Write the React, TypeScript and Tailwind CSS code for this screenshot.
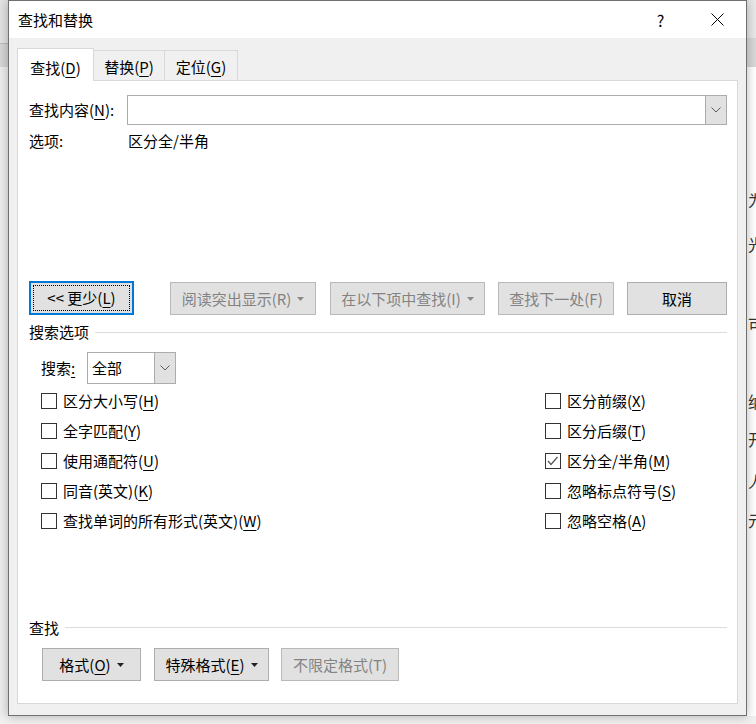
import React from "react";

const U = ({ c }: { c: string }) => (
  <span className="underline decoration-1 underline-offset-[3px]">{c}</span>
);

const Mn = ({ t, k }: { t: string; k: string }) => (
  <>
    {t}(<U c={k} />)
  </>
);

const Tri = ({ color }: { color: string }) => (
  <svg width="7" height="4" viewBox="0 0 7 4" className="ml-[6px]">
    <polygon points="0,0 7,0 3.5,4" fill={color} />
  </svg>
);

const Chev = () => (
  <svg width="10" height="6" viewBox="0 0 10 6">
    <polyline points="0.5,0.5 5,5 9.5,0.5" fill="none" stroke="#5a5a5a" strokeWidth="1" />
  </svg>
);

function Btn({
  w,
  children,
  disabled,
  arrow,
}: {
  w: string;
  children: React.ReactNode;
  disabled?: boolean;
  arrow?: boolean;
}) {
  return (
    <div
      className={`${w} h-[33px] flex items-center justify-center border bg-[#e1e1e1] ${
        disabled ? "border-[#b9b9b9] text-[#838383]" : "border-[#adadad] text-black"
      }`}
    >
      <span>{children}</span>
      {arrow && <Tri color={disabled ? "#8a8a8a" : "#222222"} />}
    </div>
  );
}

function Box({ checked }: { checked?: boolean }) {
  return (
    <span className="w-[16px] h-[16px] border border-[#333333] bg-white flex items-center justify-center shrink-0">
      {checked && (
        <svg width="14" height="14" viewBox="0 0 14 14">
          <polyline points="2,7 5,10.5 11.5,3" fill="none" stroke="#555555" strokeWidth="1.2" />
        </svg>
      )}
    </span>
  );
}

function Row({ children, checked }: { children: React.ReactNode; checked?: boolean }) {
  return (
    <div className="h-[30px] flex items-center gap-[6px]">
      <Box checked={checked} />
      <span>{children}</span>
    </div>
  );
}

export default function App() {
  return (
    <div className="w-[756px] h-[724px] overflow-hidden bg-[#f0f0f0] flex flex-col font-['Noto_Sans_CJK_SC',sans-serif] text-[15px] leading-[20px] text-black">
      <div className="flex h-[716px] shrink-0">
        {/* left background strip */}
        <div className="w-[8px] shrink-0 flex flex-col">
          <div className="h-[43px] bg-[#e3e3e3]" />
          <div className="h-[24px] bg-[#d6d6d6] border-t border-[#bcbcbc]" />
          <div className="flex-1 bg-[#eeeeee]" />
        </div>

        {/* dialog */}
        <div className="relative z-10 w-[739px] h-[716px] shrink-0 border border-[#707070] bg-[#f0f0f0] flex flex-col shadow-[0_0_10px_rgba(0,0,0,0.28)]">
          {/* title bar */}
          <div className="h-[37px] bg-white flex items-center pl-[9px] shrink-0">
            <span>查找和替换</span>
            <div className="ml-auto flex h-full">
              <div className="w-[57px] h-full flex items-center justify-center text-[16px]">?</div>
              <div className="w-[57px] h-full flex items-center justify-center">
                <svg width="13" height="13" viewBox="0 0 13 13">
                  <line x1="0.5" y1="0.5" x2="12.5" y2="12.5" stroke="#000" strokeWidth="1" />
                  <line x1="12.5" y1="0.5" x2="0.5" y2="12.5" stroke="#000" strokeWidth="1" />
                </svg>
              </div>
            </div>
          </div>

          {/* body */}
          <div className="flex-1 flex flex-col px-[8px] pt-[10px] pb-[11px]">
            {/* tabs */}
            <div className="h-[33px] flex items-end -mb-px relative z-10 shrink-0">
              <div className="w-[77px] h-[33px] bg-white border border-b-0 border-[#d9d9d9] flex items-center justify-center pt-[5px] relative z-10">
                <span>
                  <Mn t="查找" k="D" />
                </span>
              </div>
              <div className="w-[72px] h-[31px] -ml-px bg-[#f0f0f0] border border-[#d9d9d9] flex items-center justify-center pt-[3px]">
                <span>
                  <Mn t="替换" k="P" />
                </span>
              </div>
              <div className="w-[74px] h-[31px] -ml-px bg-[#f0f0f0] border border-[#d9d9d9] flex items-center justify-center pt-[3px]">
                <span>
                  <Mn t="定位" k="G" />
                </span>
              </div>
            </div>

            {/* panel */}
            <div className="flex-1 bg-white border border-[#d9d9d9] flex flex-col pl-[11px] pr-[10px]">
              {/* find what */}
              <div className="mt-[14px] h-[30px] flex items-center">
                <div className="w-[98px] shrink-0">
                  查找内容(<U c="N" />):
                </div>
                <div className="w-[600px] h-[30px] border border-[#acacac] flex">
                  <div className="flex-1 bg-white" />
                  <div className="w-[21px] bg-[#e1e1e1] border-l border-[#acacac] flex items-center justify-center">
                    <Chev />
                  </div>
                </div>
              </div>

              {/* options */}
              <div className="mt-[6px] h-[20px] flex">
                <div className="w-[99px] shrink-0">选项:</div>
                <div>区分全/半角</div>
              </div>

              {/* buttons */}
              <div className="mt-[130px] h-[34px] flex items-end">
                <div className="relative w-[105px] h-[34px] border-2 border-[#0078d7] bg-[#e1e1e1] flex items-center justify-center">
                  <div className="absolute inset-[2px] border border-dotted border-black" />
                  <span>
                    &lt;&lt; 更少(<U c="L" />)
                  </span>
                </div>
                <div className="ml-[36px]">
                  <Btn w="w-[146px]" disabled arrow>
                    阅读突出显示(R)
                  </Btn>
                </div>
                <div className="ml-[14px]">
                  <Btn w="w-[155px]" disabled arrow>
                    在以下项中查找(I)
                  </Btn>
                </div>
                <div className="ml-[13px]">
                  <Btn w="w-[116px]" disabled>
                    查找下一处(F)
                  </Btn>
                </div>
                <div className="ml-[13px]">
                  <Btn w="w-[100px]">取消</Btn>
                </div>
              </div>

              {/* search options header */}
              <div className="mt-[7px] h-[20px] flex items-center">
                <span>搜索选项</span>
                <div className="flex-1 h-px bg-[#dcdcdc] ml-[6px] mt-[1px]" />
              </div>

              {/* search select */}
              <div className="mt-[10px] h-[32px] flex items-center pl-[12px]">
                <div className="w-[46px] shrink-0">
                  搜索<U c=":" />
                </div>
                <div className="w-[89px] h-[32px] border border-[#acacac] flex bg-white">
                  <div className="flex-1 flex items-center pl-[4px]">全部</div>
                  <div className="w-[21px] bg-[#e1e1e1] border-l border-[#acacac] flex items-center justify-center">
                    <Chev />
                  </div>
                </div>
              </div>

              {/* checkboxes */}
              <div className="mt-[2px] flex">
                <div className="w-[516px] shrink-0 pl-[12px] flex flex-col">
                  <Row>
                    <Mn t="区分大小写" k="H" />
                  </Row>
                  <Row>
                    <Mn t="全字匹配" k="Y" />
                  </Row>
                  <Row>
                    <Mn t="使用通配符" k="U" />
                  </Row>
                  <Row>
                    <Mn t="同音(英文)" k="K" />
                  </Row>
                  <Row>
                    <Mn t="查找单词的所有形式(英文)" k="W" />
                  </Row>
                </div>
                <div className="flex flex-col">
                  <Row>
                    <Mn t="区分前缀" k="X" />
                  </Row>
                  <Row>
                    <Mn t="区分后缀" k="T" />
                  </Row>
                  <Row checked>
                    <Mn t="区分全/半角" k="M" />
                  </Row>
                  <Row>
                    <Mn t="忽略标点符号" k="S" />
                  </Row>
                  <Row>
                    <Mn t="忽略空格" k="A" />
                  </Row>
                </div>
              </div>

              {/* find section */}
              <div className="mt-[82px] h-[20px] flex items-center">
                <span>查找</span>
                <div className="flex-1 h-px bg-[#dcdcdc] ml-[6px] mt-[-1px]" />
              </div>

              <div className="mt-[10px] flex pl-[13px]">
                <Btn w="w-[99px]" arrow>
                  <Mn t="格式" k="O" />
                </Btn>
                <div className="ml-[13px]">
                  <Btn w="w-[115px]" arrow>
                    <Mn t="特殊格式" k="E" />
                  </Btn>
                </div>
                <div className="ml-[12px]">
                  <Btn w="w-[118px]" disabled>
                    不限定格式(T)
                  </Btn>
                </div>
              </div>
            </div>
          </div>
        </div>

        {/* right background strip (document) */}
        <div className="flex-1 flex flex-col overflow-hidden">
          <div className="h-[38px] bg-[#e8e8e8] shrink-0" />
          <div className="h-[29px] bg-[#d8d8d8] shrink-0" />
          <div className="flex-1 bg-white flex flex-col text-[16px] leading-[20px] text-[#333333] whitespace-nowrap pl-[1px]">
            <div className="mt-[123px]">为</div>
            <div className="mt-[24px]">光</div>
            <div className="mt-[60px]">可</div>
            <div className="mt-[57px]">纳</div>
            <div className="mt-[18px]">开</div>
            <div className="mt-[22px]">人</div>
            <div className="mt-[19px]">元</div>
          </div>
        </div>
      </div>
      <div className="flex-1 bg-[#f0f0f0]" />
    </div>
  );
}
